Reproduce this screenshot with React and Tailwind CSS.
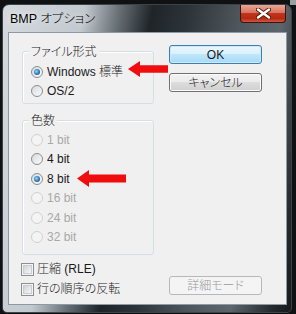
import React from 'react';

const ui = {
    fontFamily: '"Liberation Sans", "Noto Sans CJK JP", sans-serif',
    fontFeatureSettings: '"palt"',
};

function Radio({ label, checked = false, disabled = false }) {
    return (
        <div className="flex h-[19.5px] items-center">
            <span
                className={`flex h-[12px] w-[12px] items-center justify-center rounded-full border ${
                    disabled
                        ? 'border-[#cfd1d3] bg-[#f4f4f4]'
                        : 'border-[#8a8e92] bg-[linear-gradient(135deg,#d6d9dc,#fbfbfb)]'
                }`}
            >
                {checked && (
                    <span className="h-[6px] w-[6px] rounded-full bg-[radial-gradient(circle_at_40%_40%,#9bd8f8_0%,#2a7ab6_55%,#0d3a63_100%)]" />
                )}
            </span>
            <span className={`ml-[4px] text-[12px] leading-[14px] ${disabled ? 'text-[#a8a8a8]' : 'text-[#1a1a1a]'}`}>
                {label}
            </span>
        </div>
    );
}

function Checkbox({ label }) {
    return (
        <div className="-ml-px flex h-[20px] items-center">
            <span className="flex h-[13px] w-[13px] items-center justify-center border border-[#8e8f8f] bg-[#f4f4f4]">
                <span className="h-[9px] w-[9px] border border-[#c9ccd0] bg-[linear-gradient(135deg,#cfd2d5,#f7f7f7)]" />
            </span>
            <span className="ml-[3px] text-[12px] leading-[14px] text-[#1a1a1a]">{label}</span>
        </div>
    );
}

function Button({ children, primary = false, disabled = false, className = '' }) {
    const tone = disabled
        ? 'border-[#b5b9bc] bg-[#f4f4f4] text-[#9a9a9a]'
        : primary
        ? 'border-[#3c7fb1] bg-[linear-gradient(#eaf6fd_0%,#d9f0fc_50%,#bee6fd_50%,#a7d9f5_100%)] text-[#1a1a1a] shadow-[inset_0_0_0_1px_#cde9f8]'
        : 'border-[#707070] bg-[linear-gradient(#f2f2f2_0%,#ebebeb_50%,#dddddd_50%,#cfcfcf_100%)] text-[#1a1a1a] shadow-[inset_0_0_0_1px_#fcfcfc]';
    return (
        <div
            className={`flex h-[19px] w-[93px] items-center justify-center rounded-[3px] border text-[12px] leading-[14px] ${tone} ${className}`}
        >
            {children}
        </div>
    );
}

function GroupBox({ title, className = '', children }) {
    return (
        <div className={`relative rounded-[3px] border border-[#d5dfe5] shadow-[inset_1px_1px_0_#ffffff] ${className}`}>
            <span className="absolute -top-[7px] left-[6px] bg-[#f0f0f0] px-[2px] text-[12px] leading-[14px] text-[#1a1a1a]">
                {title}
            </span>
            {children}
        </div>
    );
}

function Arrow({ className, width, height }) {
    const mid = height / 2;
    const head = 12;
    const shaft = height * 0.24;
    return (
        <svg className={`absolute ${className}`} width={width} height={height} viewBox={`0 0 ${width} ${height}`}>
            <polygon
                fill="#f00d0d"
                points={`0,${mid} ${head},0 ${head},${mid - shaft} ${width},${mid - shaft} ${width},${mid + shaft} ${head},${mid + shaft} ${head},${height}`}
            />
        </svg>
    );
}

export default function App() {
    return (
        <div className="relative h-[314px] w-[296px] overflow-hidden bg-[#0f1112] font-light" style={ui}>
            <div className="absolute right-0 top-0 h-[5px] w-[6px] bg-[#9a9fa3]" />

            {/* ウィンドウ枠 */}
            <div className="ml-[2px] mt-[4px] flex h-[309px] w-[290px] flex-col rounded-t-[7px] rounded-b-[5px] border border-[#3b4248] bg-[linear-gradient(100deg,#d4d9dd_0%,#c2c9cf_24%,#6a7279_34%,#1e2428_44%,#2e353a_55%,#4f575e_70%,#5d666d_82%,#262b2f_94%,#16191b_100%)]">
                <div className="flex h-[27px] items-start">
                    <span className="ml-[7px] mt-[7px] text-[12.5px] leading-[14px] text-black [text-shadow:0_0_6px_rgba(255,255,255,0.9)]">
                        BMP オプション
                    </span>
                    <div className="ml-auto mr-[5px] flex h-[18px] w-[46px] items-center justify-center rounded-b-[4px] border border-t-0 border-[#3a1410] bg-[linear-gradient(#e9a795_0%,#d9745f_45%,#c0331c_50%,#b62a14_80%,#d4593c_100%)]">
                        <svg width="15" height="11" viewBox="0 0 15 11">
                            <path d="M2 1.5 L13 9.5 M13 1.5 L2 9.5" stroke="#4a1a12" strokeWidth="4.2" strokeLinecap="round" />
                            <path d="M2 1.5 L13 9.5 M13 1.5 L2 9.5" stroke="#ffffff" strokeWidth="2.4" strokeLinecap="round" />
                        </svg>
                    </div>
                </div>

                {/* クライアント領域 */}
                <div className="ml-[5px] flex h-[273px] w-[279px] border border-[#8d99a4] bg-[#f0f0f0] pb-[5px] pl-[13px]">
                    <div className="flex w-[132px] flex-col">
                        <GroupBox title="ファイル形式" className="mt-[18px] h-[53px] pl-[8px] pt-[10px]">
                            <Radio label="Windows 標準" checked />
                            <Radio label="OS/2" />
                        </GroupBox>

                        <GroupBox title="色数" className="mt-[16px] h-[135px] pl-[8px] pt-[9px]">
                            <Radio label="1 bit" disabled />
                            <Radio label="4 bit" />
                            <Radio label="8 bit" checked />
                            <Radio label="16 bit" disabled />
                            <Radio label="24 bit" disabled />
                            <Radio label="32 bit" disabled />
                        </GroupBox>

                        <div className="mt-[4px]">
                            <Checkbox label="圧縮 (RLE)" />
                            <Checkbox label="行の順序の反転" />
                        </div>
                    </div>

                    <div className="ml-[15px] flex flex-col">
                        <Button primary className="mt-[12px]">OK</Button>
                        <Button className="mt-[9px]">キャンセル</Button>
                        <Button disabled className="mb-[4px] mt-auto">詳細モード</Button>
                    </div>
                </div>
            </div>

            <Arrow className="left-[128px] top-[61px]" width={40} height={16} />
            <Arrow className="left-[77px] top-[170px]" width={49} height={17} />
        </div>
    );
}
